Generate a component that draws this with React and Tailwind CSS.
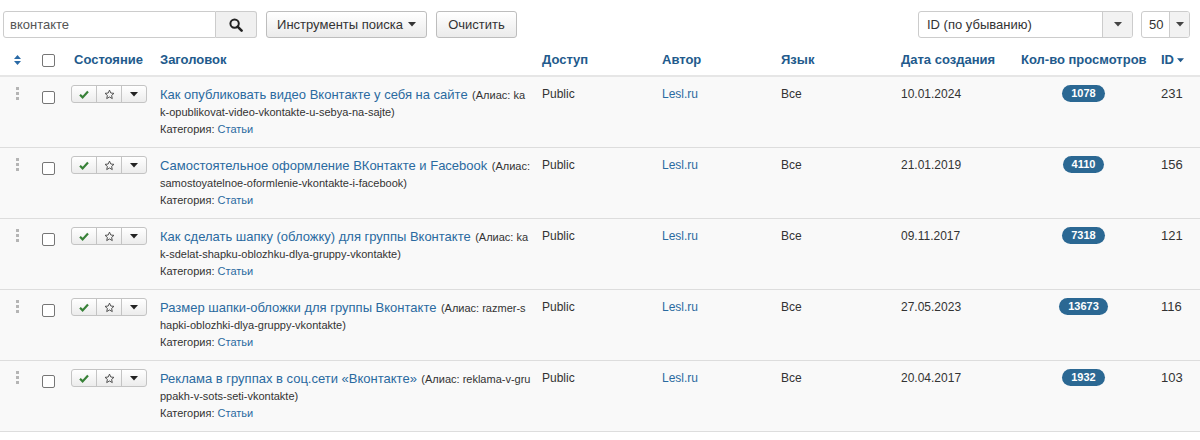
import React from "react";

const rows = [
  {
    t: "Как опубликовать видео Вконтакте у себя на сайте",
    a1: "(Алиас: ka",
    a2: "k-opublikovat-video-vkontakte-u-sebya-na-sajte)",
    date: "10.01.2024",
    views: "1078",
    id: "231",
  },
  {
    t: "Самостоятельное оформление ВКонтакте и Facebook",
    a1: "(Алиас:",
    a2: "samostoyatelnoe-oformlenie-vkontakte-i-facebook)",
    date: "21.01.2019",
    views: "4110",
    id: "156",
  },
  {
    t: "Как сделать шапку (обложку) для группы Вконтакте",
    a1: "(Алиас: ka",
    a2: "k-sdelat-shapku-oblozhku-dlya-gruppy-vkontakte)",
    date: "09.11.2017",
    views: "7318",
    id: "121",
  },
  {
    t: "Размер шапки-обложки для группы Вконтакте",
    a1: "(Алиас: razmer-s",
    a2: "hapki-oblozhki-dlya-gruppy-vkontakte)",
    date: "27.05.2023",
    views: "13673",
    id: "116",
  },
  {
    t: "Реклама в группах в соц.сети «Вконтакте»",
    a1: "(Алиас: reklama-v-gru",
    a2: "ppakh-v-sots-seti-vkontakte)",
    date: "20.04.2017",
    views: "1932",
    id: "103",
  },
];

const grid =
  "grid grid-cols-[34px_37px_89px_382px_120px_119px_120px_120px_140px_39px]";

function Caret({ className = "" }) {
  return (
    <svg width="8" height="5" viewBox="0 0 8 5" className={className}>
      <path d="M0 0h8L4 4.5z" fill="currentColor" />
    </svg>
  );
}

function Checkbox() {
  return (
    <div className="w-[13px] h-[13px] rounded-[2px] border border-[#767676] bg-white" />
  );
}

function SearchIcon() {
  return (
    <svg width="14" height="14" viewBox="0 0 14 14">
      <circle cx="5.6" cy="5.6" r="4.2" fill="none" stroke="#222" strokeWidth="2" />
      <path d="M8.6 8.6l4 4" stroke="#222" strokeWidth="2.6" strokeLinecap="round" />
    </svg>
  );
}

function StatusGroup() {
  return (
    <div className="flex h-[18px] w-[76px] rounded-[3px] border border-[#c4c4c4] bg-gradient-to-b from-white to-[#ececec] overflow-hidden">
      <div className="w-[25px] flex items-center justify-center border-r border-[#c4c4c4]">
        <svg width="10" height="9" viewBox="0 0 10 9">
          <path d="M1 4.8l2.6 2.6L9 1.6" fill="none" stroke="#378137" strokeWidth="2.2" />
        </svg>
      </div>
      <div className="w-[25px] flex items-center justify-center border-r border-[#c4c4c4]">
        <svg width="11" height="11" viewBox="0 0 24 24">
          <path
            d="M12 2.5l2.9 6.3 6.8.7-5.1 4.6 1.5 6.8L12 17.4l-6.1 3.5 1.5-6.8-5.1-4.6 6.8-.7z"
            fill="none"
            stroke="#444"
            strokeWidth="2"
            strokeLinejoin="round"
          />
        </svg>
      </div>
      <div className="flex-1 flex items-center justify-center text-[#222]">
        <Caret />
      </div>
    </div>
  );
}

function DragHandle() {
  return (
    <div className="flex flex-col gap-[2px] items-center">
      <div className="w-[3px] h-[3px] bg-[#b5b5b5]" />
      <div className="w-[3px] h-[3px] bg-[#b5b5b5]" />
      <div className="w-[3px] h-[3px] bg-[#b5b5b5]" />
    </div>
  );
}

export default function App() {
  return (
    <div
      className="w-[1200px] h-[440px] bg-white text-[#333] overflow-hidden"
      style={{ fontFamily: '"Liberation Sans", Arial, sans-serif' }}
    >
      {/* toolbar */}
      <div className="flex items-start h-[45px] pt-[11px] pl-[3px]">
        <div className="flex h-[27px]">
          <div className="w-[213px] h-full border border-[#ccc] rounded-l-[3px] flex items-center pl-[6px] text-[13px] text-[#555]">
            вконтакте
          </div>
          <div className="w-[41px] h-full border border-l-0 border-[#ccc] rounded-r-[3px] bg-[#f0f0f0] flex items-center justify-center">
            <SearchIcon />
          </div>
        </div>
        <div className="ml-[9px] w-[161px] h-[27px] border border-[#bdbdbd] rounded-[3px] bg-gradient-to-b from-white to-[#ebebeb] flex items-center justify-center gap-[5px] text-[13px] text-[#333]">
          Инструменты поиска <Caret className="text-[#333]" />
        </div>
        <div className="ml-[9px] w-[81px] h-[27px] border border-[#bdbdbd] rounded-[3px] bg-gradient-to-b from-white to-[#ebebeb] flex items-center justify-center text-[13px] text-[#333]">
          Очистить
        </div>
        <div className="flex-1" />
        <div className="w-[215px] h-[27px] border border-[#ccc] rounded-[3px] flex overflow-hidden">
          <div className="flex-1 flex items-center pl-[8px] text-[13px] text-[#333]">
            ID (по убыванию)
          </div>
          <div className="w-[30px] border-l border-[#ccc] bg-[#f2f2f2] flex items-center justify-center text-[#444]">
            <Caret />
          </div>
        </div>
        <div className="ml-[8px] mr-[10px] w-[49px] h-[27px] border border-[#ccc] rounded-[3px] flex overflow-hidden">
          <div className="flex-1 flex items-center pl-[7px] text-[13px] text-[#333]">
            50
          </div>
          <div className="w-[20px] border-l border-[#ccc] bg-[#f2f2f2] flex items-center justify-center text-[#444]">
            <Caret />
          </div>
        </div>
      </div>

      {/* header */}
      <div
        className={`${grid} h-[32px] items-center border-b-2 border-[#e6e6e6] text-[13px] font-bold text-[#225a8c]`}
      >
        <div className="flex justify-center">
          <svg width="7" height="10" viewBox="0 0 7 10">
            <path d="M0 4h7L3.5 0z M0 6h7L3.5 10z" fill="#2a6aa6" />
          </svg>
        </div>
        <div className="pl-[8px]">
          <Checkbox />
        </div>
        <div className="pl-[3px]">Состояние</div>
        <div>Заголовок</div>
        <div>Доступ</div>
        <div>Автор</div>
        <div>Язык</div>
        <div>Дата создания</div>
        <div className="whitespace-nowrap">Кол-во просмотров</div>
        <div className="flex items-center gap-[3px]">
          ID <Caret className="w-[7px]" />
        </div>
      </div>

      {/* rows */}
      {rows.map((r, i) => (
        <div
          key={i}
          className={`${grid} h-[71px] bg-[#f9f9f9] border-b border-[#dddddd] items-start`}
        >
          <div className="flex justify-center pt-[10px]">
            <DragHandle />
          </div>
          <div className="pl-[8px] pt-[14px]">
            <Checkbox />
          </div>
          <div className="pt-[8px]">
            <StatusGroup />
          </div>
          <div className="pt-[8px] whitespace-nowrap">
            <div className="h-[18px] leading-[18px]">
              <span className="text-[13px] text-[#2a6aa0]">{r.t}</span>{" "}
              <span className="text-[11px] text-[#333]">{r.a1}</span>
            </div>
            <div className="h-[18px] leading-[18px] text-[11px] text-[#333]">
              {r.a2}
            </div>
            <div className="h-[17px] leading-[17px] text-[11px] text-[#333]">
              Категория: <span className="text-[#2a6aa0]">Статьи</span>
            </div>
          </div>
          <div className="pt-[8px] leading-[18px] text-[12px] text-[#333]">
            Public
          </div>
          <div className="pt-[8px] leading-[18px] text-[12px] text-[#2a6aa0]">
            Lesl.ru
          </div>
          <div className="pt-[8px] leading-[18px] text-[12px] text-[#333]">
            Все
          </div>
          <div className="pt-[8px] leading-[18px] text-[12px] text-[#333]">
            {r.date}
          </div>
          <div className="pt-[8px] w-[125px] flex justify-center">
            <span className="h-[17px] px-[9px] rounded-full bg-[#2b6893] text-white text-[11px] font-bold leading-[17px]">
              {r.views}
            </span>
          </div>
          <div className="pt-[8px] leading-[18px] text-[13px] text-[#333]">
            {r.id}
          </div>
        </div>
      ))}
    </div>
  );
}
